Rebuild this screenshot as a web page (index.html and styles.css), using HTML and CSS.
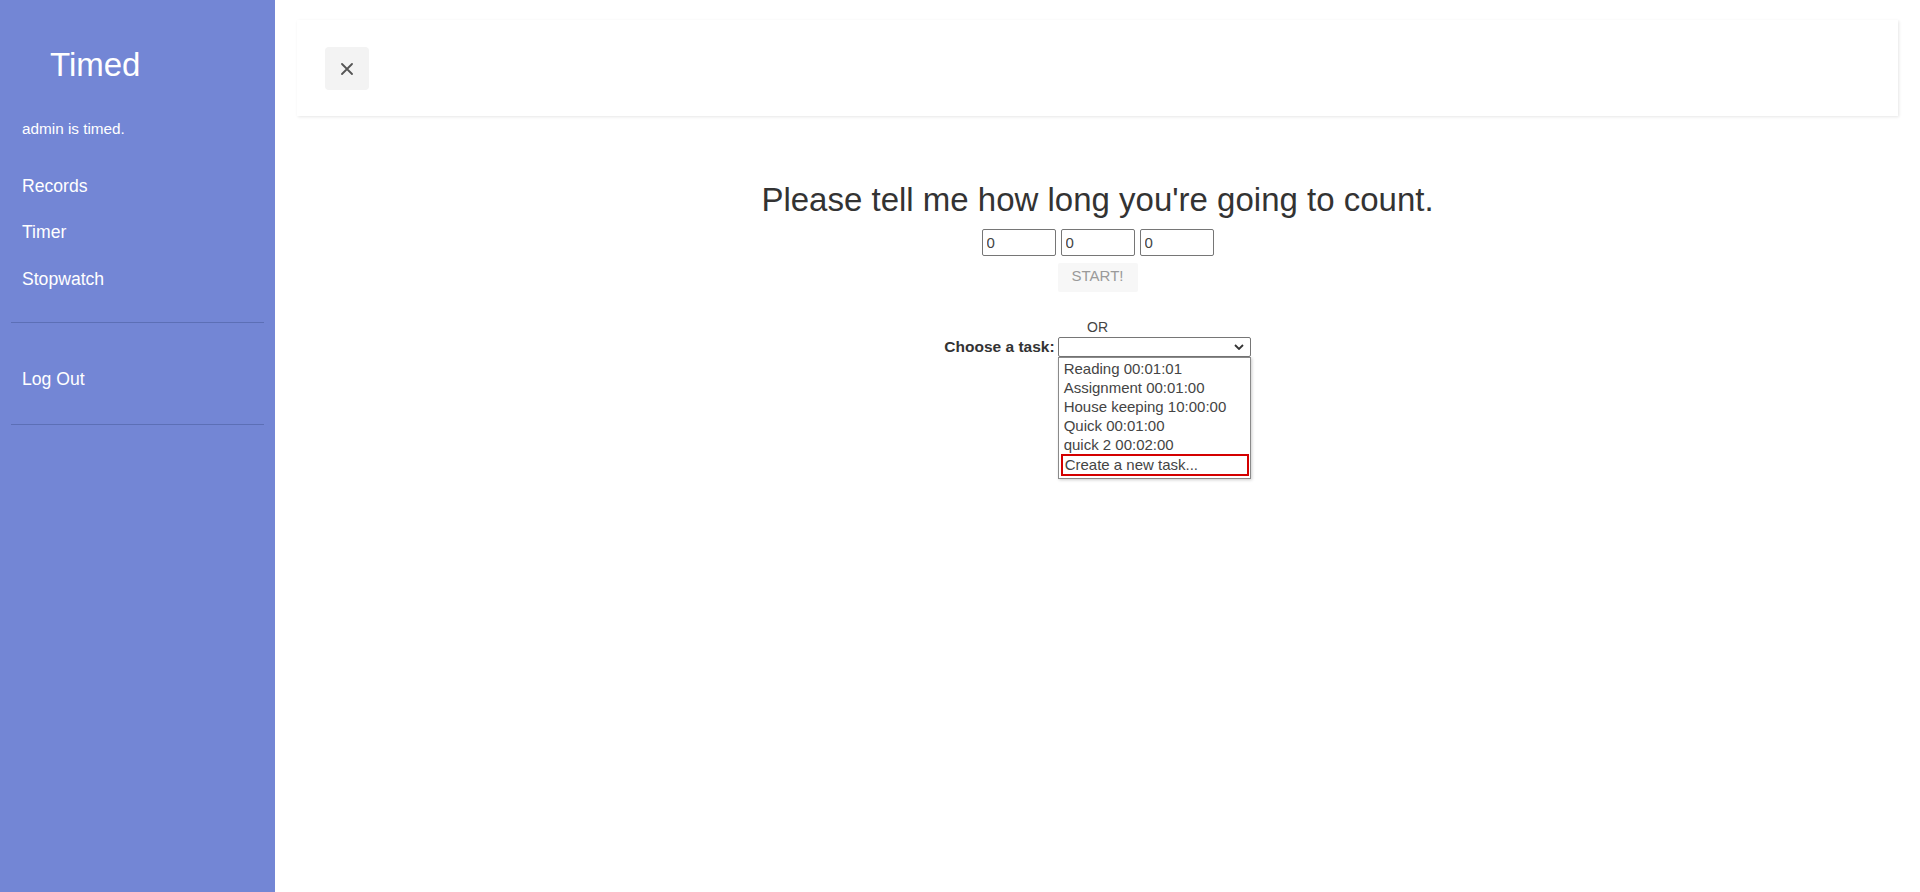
FILE: index.html
```html
<!DOCTYPE html>
<html lang="en">
<head>
<meta charset="utf-8">
<title>Timed</title>
<link rel="stylesheet" href="styles.css">
</head>
<body>
<div class="wrapper">
  <nav class="sidebar">
    <div class="sidebar-header"><h3>Timed</h3></div>
    <p class="user">admin is timed.</p>
    <ul class="components">
      <li><a href="#">Records</a></li>
      <li><a href="#">Timer</a></li>
      <li><a href="#">Stopwatch</a></li>
    </ul>
    <ul class="components logout">
      <li><a href="#">Log Out</a></li>
    </ul>
  </nav>
  <main class="content">
    <div class="topbar">
      <button class="close-btn" type="button" aria-label="Close">
        <svg width="12" height="12" viewBox="0 0 12 12"><path d="M1 1L11 11M11 1L1 11" stroke="#555" stroke-width="1.8" stroke-linecap="round" fill="none"/></svg>
      </button>
    </div>
    <section class="timer">
      <h2>Please tell me how long you're going to count.</h2>
      <div class="time-inputs">
        <input type="text" value="0">
        <input type="text" value="0">
        <input type="text" value="0">
      </div>
      <button class="start" type="button" disabled>START!</button>
      <div class="or">OR</div>
      <div class="task-row">
        <label class="task-label">Choose a task:</label>
        <div class="select-wrap">
          <div class="select">
            <svg class="chev" width="10" height="6" viewBox="0 0 10 6"><path d="M1 1L5 5L9 1" stroke="#333" stroke-width="1.8" fill="none"/></svg>
          </div>
          <ul class="dropdown">
            <li>Reading 00:01:01</li>
            <li>Assignment 00:01:00</li>
            <li>House keeping 10:00:00</li>
            <li>Quick 00:01:00</li>
            <li>quick 2 00:02:00</li>
            <li class="active">Create a new task...</li>
          </ul>
        </div>
      </div>
    </section>
  </main>
</div>
</body>
</html>
```
FILE: styles.css
```css
* { box-sizing: border-box; }
html, body { margin: 0; padding: 0; }
body {
  font-family: "Liberation Sans", Arial, sans-serif;
  background: #fff;
  color: #333;
}
.wrapper {
  display: flex;
  min-height: 100vh;
}
.sidebar {
  width: 275px;
  flex: 0 0 275px;
  background: #7386d5;
  color: #fff;
  min-height: 892px;
}
.sidebar-header {
  padding: 46px 0 0 50px;
}
.sidebar-header h3 {
  margin: 0;
  font-size: 33px;
  line-height: 38.4px;
  font-weight: 400;
}
.user {
  margin: 34px 0 0 22px;
  font-size: 15.3px;
  line-height: 22.5px;
}
.components {
  list-style: none;
  margin: 0 11px;
  padding: 22px 0 20px;
  border-bottom: 1px solid #5c6fb6;
}
.components a {
  display: block;
  padding: 10px 11px;
  font-size: 17.6px;
  line-height: 26.4px;
  color: #fff;
  text-decoration: none;
}
.components.logout {
  padding: 33px 0 21px;
}
.content {
  flex: 1;
  padding: 20px 22px;
}
.topbar {
  background: #fff;
  padding: 27px 28px 26px;
  box-shadow: 1px 1px 3px rgba(0,0,0,0.1);
  display: flex;
}
.close-btn {
  width: 44px;
  height: 43px;
  border: none;
  border-radius: 4px;
  background: #f3f3f3;
  display: flex;
  align-items: center;
  justify-content: center;
  padding: 0;
}
.timer {
  display: flex;
  flex-direction: column;
  align-items: center;
}
.timer h2 {
  margin: 65px 0 0;
  font-size: 33px;
  line-height: 37px;
  font-weight: 400;
  color: #333;
}
.time-inputs {
  margin-top: 11px;
  display: flex;
  gap: 5px;
}
.time-inputs input {
  width: 74px;
  height: 27px;
  border: 1px solid #767676;
  border-radius: 2px;
  padding: 0 4px;
  font-family: "Liberation Sans", Arial, sans-serif;
  font-size: 15px;
  color: #444;
}
.start {
  margin-top: 7px;
  width: 80px;
  height: 29px;
  border: none;
  border-radius: 2px;
  background: #f7f7f7;
  color: #9a9a9a;
  font-family: "Liberation Sans", Arial, sans-serif;
  font-size: 15px;
  padding: 0 0 4px;
}
.or {
  margin-top: 27px;
  font-size: 14px;
  line-height: 16px;
  color: #444;
}
.task-row {
  margin-top: 2px;
  display: flex;
  align-items: center;
  gap: 3px;
}
.task-label {
  font-weight: 700;
  font-size: 15.5px;
  line-height: 20px;
  color: #333;
}
.select-wrap {
  position: relative;
}
.select {
  width: 193px;
  height: 20px;
  border: 1px solid #767676;
  border-radius: 2px;
  background: #fff;
  position: relative;
}
.chev {
  position: absolute;
  right: 6px;
  top: 6px;
}
.dropdown {
  position: absolute;
  top: 100%;
  left: 0;
  width: 193px;
  margin: 0;
  padding: 1px 1px 2px;
  list-style: none;
  background: #fff;
  border: 1px solid #8a8a8a;
  box-shadow: 1px 1px 3px rgba(0,0,0,0.2);
}
.dropdown li {
  height: 19px;
  line-height: 19px;
  padding: 0 4px;
  font-size: 15px;
  color: #444;
  white-space: nowrap;
}
.dropdown li.active {
  height: 22px;
  line-height: 18px;
  margin-left: 1px;
  padding: 0 2px;
  border: 2px solid #d40000;
}
```
